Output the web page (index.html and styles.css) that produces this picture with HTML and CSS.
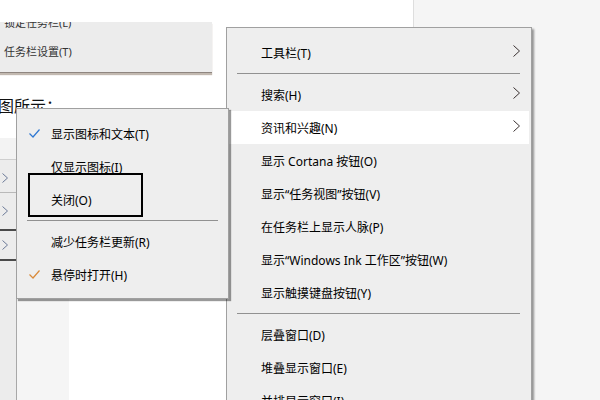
FILE: index.html
```html
<!DOCTYPE html>
<html lang="zh-CN">
<head>
  <meta charset="UTF-8" />
  <title>任务栏菜单</title>
  <link rel="stylesheet" href="styles.css">
</head>
<body>
  <div class="canvas">
    <!-- 右侧灰色背景 -->
    <div class="side-bg"></div>

    <!-- 上方截图：任务栏菜单片段 -->
    <div class="shot-top">
      <ul class="shot-list">
        <li>锁定任务栏(L)</li>
        <li>任务栏设置(T)</li>
      </ul>
    </div>

    <p class="caption">图所示：</p>

    <!-- 左侧被遮挡的菜单 -->
    <div class="shot-left">
      <div class="ls-head"></div>
      <div class="ls-row ls-light"><svg class="ls-chev" viewBox="0 0 6 10"><polyline points="0.5,0.5 5.5,5 0.5,9.5"/></svg></div>
      <div class="ls-row ls-dark"><svg class="ls-chev" viewBox="0 0 6 10"><polyline points="0.5,0.5 5.5,5 0.5,9.5"/></svg></div>
      <div class="ls-row ls-last ls-dark"><svg class="ls-chev" viewBox="0 0 6 10"><polyline points="0.5,0.5 5.5,5 0.5,9.5"/></svg></div>
      <div class="ls-rest"></div>
    </div>

    <!-- 后面的窗口 -->
    <div class="shot-window">
      <div class="win-side"></div>
      <div class="win-main"></div>
    </div>

    <!-- 任务栏右键菜单 -->
    <div class="menu menu-main">
      <div class="item">工具栏(T)<svg class="chev" viewBox="0 0 7 12"><polyline points="0.5,0.5 6.5,6 0.5,11.5"/></svg></div>
      <div class="sep"></div>
      <div class="item">搜索(H)<svg class="chev" viewBox="0 0 7 12"><polyline points="0.5,0.5 6.5,6 0.5,11.5"/></svg></div>
      <div class="item active">资讯和兴趣(N)<svg class="chev" viewBox="0 0 7 12"><polyline points="0.5,0.5 6.5,6 0.5,11.5"/></svg></div>
      <div class="item">显示 Cortana 按钮(O)</div>
      <div class="item">显示“任务视图”按钮(V)</div>
      <div class="item">在任务栏上显示人脉(P)</div>
      <div class="item">显示“Windows Ink 工作区”按钮(W)</div>
      <div class="item">显示触摸键盘按钮(Y)</div>
      <div class="sep"></div>
      <div class="item">层叠窗口(D)</div>
      <div class="item">堆叠显示窗口(E)</div>
      <div class="item">并排显示窗口(I)</div>
    </div>

    <!-- 资讯和兴趣 子菜单 -->
    <div class="menu menu-sub">
      <div class="item"><span class="check"><svg viewBox="0 0 11 9" class="blue"><polyline points="0.5,4.5 4,8 10.5,0.5"/></svg></span>显示图标和文本(T)</div>
      <div class="item"><span class="check"></span>仅显示图标(I)</div>
      <div class="item"><span class="check"></span>关闭(O)</div>
      <div class="sep"></div>
      <div class="item"><span class="check"></span>减少任务栏更新(R)</div>
      <div class="item"><span class="check"><svg viewBox="0 0 11 9" class="orange"><polyline points="0.5,4.5 4,8 10.5,0.5"/></svg></span>悬停时打开(H)</div>
    </div>

    <!-- 标注框 -->
    <div class="mark"></div>
  </div>
</body>
</html>
```

FILE: styles.css
```css
html,body{margin:0;padding:0}
body{background:#fff;font-family:"Noto Sans","Noto Sans CJK SC",sans-serif;font-size:12px;color:#000;overflow:hidden}
.canvas{position:relative;width:600px;height:400px;overflow:hidden;background:#fff}

.side-bg{position:absolute;left:413px;top:0;width:187px;height:400px;background:#f5f5f5;border-left:1px solid #dedede}

/* 上方截图 */
.shot-top{position:absolute;left:0;top:22px;width:212px;height:50px;background:#ececec;overflow:hidden;border-bottom:1px solid #8f8680;box-shadow:0 2px 1px rgba(120,100,80,.45)}
.shot-list{list-style:none;margin:-14px 0 0;padding:0 0 0 4px;font-size:11px;color:#333}
.shot-list li{height:29px;line-height:29px}

.caption{position:absolute;left:-2px;top:93px;margin:0;font-family:"Noto Sans CJK SC",sans-serif;font-size:16px;color:#111}

/* 左侧被遮挡的菜单 */
.shot-left{position:absolute;left:0;top:138px;width:16px;height:262px;background:#ececec;display:flex;flex-direction:column}
.ls-head{height:21px;background:#f3f3f3;border-bottom:1px solid #cfcfcf}
.ls-row{display:flex;align-items:center;padding-left:2px}
.ls-row:nth-child(2){height:33px;padding-top:4px;box-sizing:border-box}
.ls-row:nth-child(3){height:36px}
.ls-last{height:28px}
.ls-light{border-bottom:1px solid #b9b9b9}
.ls-dark{border-bottom:2px solid #4a4a4a}
.ls-chev{width:6px;height:10px;fill:none;stroke:#6c7a98;stroke-width:1}
.ls-rest{flex:1}

/* 后面的窗口 */
.shot-window{position:absolute;left:16px;top:250px;width:210px;height:150px;display:grid;grid-template-columns:52px 1fr;border-left:1px solid #a8a8a8;box-shadow:inset 3px 0 2px -1px rgba(0,0,0,.35)}
.win-side{background:#f5f5f5}
.win-main{background:#fff}

/* 菜单 */
.menu{position:absolute;box-sizing:border-box;background:#eee;border:1px solid #a0a0a0;box-shadow:2px 2px 2px rgba(0,0,0,.4)}
.item{display:flex;align-items:center;height:33px;white-space:nowrap}
.sep{height:1px;background:#919191}

.menu-main{left:226px;top:27px;width:306px;height:420px;padding:8px 2px 0 0}
.menu-main .item{padding:0 9px 0 34px}
.menu-main .item.active{background:#fff}
.menu-main .sep{margin:4px 9px 4px 10px}
.chev{width:7px;height:12px;margin-left:auto;margin-top:-3px;fill:none;stroke:#3a3030;stroke-width:1}

.menu-sub{left:16px;top:108px;width:213px;height:191px;padding:8px 0 7px;box-shadow:2px 2px 1px rgba(0,0,0,.4)}
.menu-sub .item{padding-left:12px}
.menu-sub .sep{margin:4px 10px}
.check{width:22px;display:flex;align-items:center}
.check svg{width:11px;height:9px;fill:none;stroke-width:1.2}
.check .blue{stroke:#2f78d2}
.check .orange{stroke:#d98a3a}

.mark{position:absolute;left:28px;top:173px;width:115px;height:44px;box-sizing:border-box;border:2px solid #000}
```
